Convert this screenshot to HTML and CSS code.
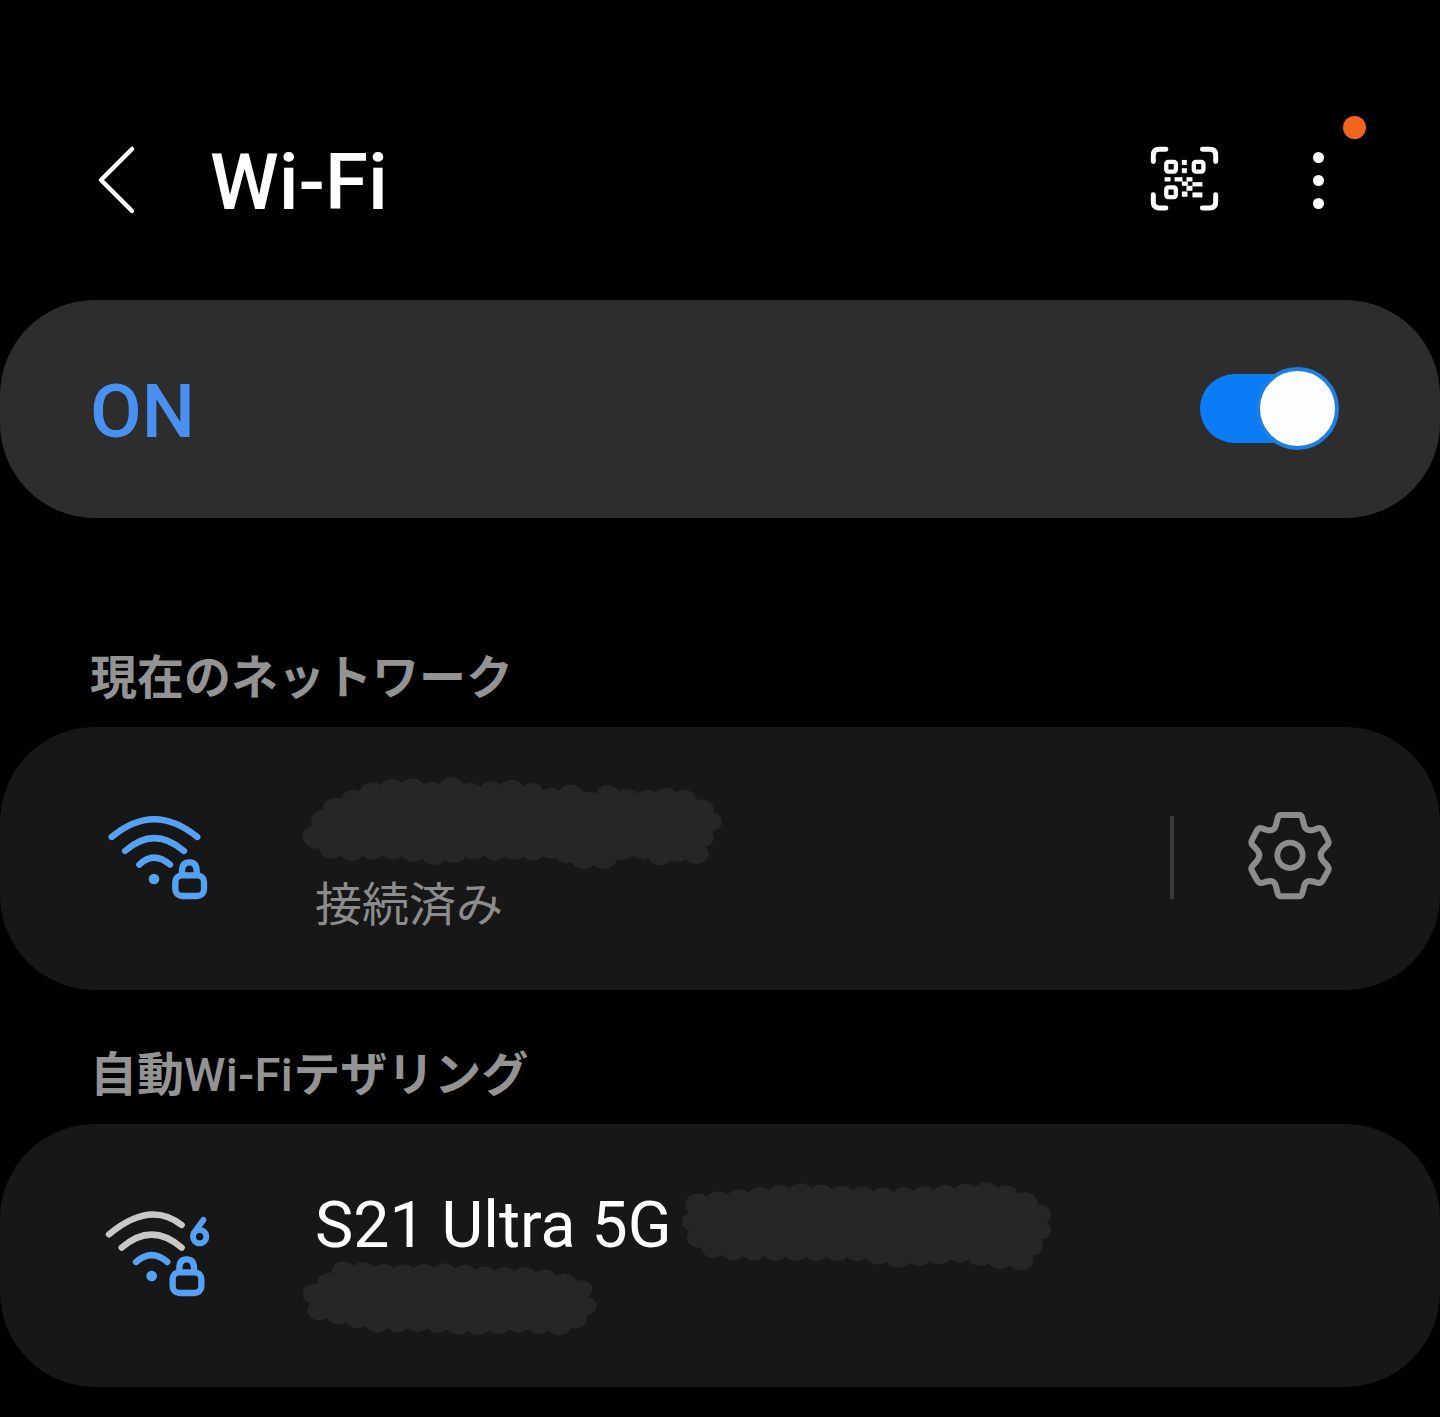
FILE: index.html
```html
<!DOCTYPE html>
<html lang="ja">
  <head>
    <title>Wi-Fi</title>
    <meta name="viewport" content="width=device-width, initial-scale=1" />
    <link rel="stylesheet" href="styles.css">
  </head>
  <body>
    <header class="header">
      <svg class="back" viewBox="0 0 40 72" width="40" height="72">
        <path d="M36 5 L5 36 L36 67" fill="none" stroke="#fff" stroke-width="4.5" stroke-linecap="round" stroke-linejoin="round" />
      </svg>
      <h1 class="title">Wi-Fi</h1>
      <svg class="qr" viewBox="60 135 212 202" width="71" height="67">
        <g fill="none" stroke="#fff" stroke-width="15" stroke-linecap="round">
          <path d="M72 185 V166 Q72 148 90 148 H110" />
          <path d="M220 148 H242 Q260 148 260 166 V185" />
          <path d="M72 285 V307 Q72 325 90 325 H110" />
          <path d="M220 325 H242 Q260 325 260 307 V285" />
        </g>
        <g fill="none" stroke="#fff" stroke-width="13">
          <rect x="111" y="186" width="29" height="29" rx="6" />
          <rect x="194" y="186" width="29" height="29" rx="6" />
          <rect x="111" y="263" width="29" height="29" rx="6" />
        </g>
        <g fill="#fff">
          <rect x="158" y="180" width="15" height="15" />
          <rect x="158" y="205" width="15" height="15" />
          <rect x="106" y="232" width="18" height="13" />
          <rect x="136" y="232" width="24" height="13" />
          <rect x="172" y="232" width="18" height="13" />
          <rect x="158" y="245" width="18" height="13" />
          <rect x="190" y="247" width="30" height="13" />
          <rect x="172" y="258" width="18" height="15" />
          <rect x="158" y="275" width="17" height="16" />
          <rect x="190" y="278" width="30" height="15" />
        </g>
      </svg>
      <div class="more">
        <span class="more-dot"></span>
        <span class="more-dot"></span>
        <span class="more-dot"></span>
        <span class="badge"></span>
      </div>
    </header>

    <section class="card-switch">
      <span class="on-label">ON</span>
      <div class="toggle"><span class="thumb"></span></div>
    </section>

    <h2 class="section-label first">現在のネットワーク</h2>
    <section class="card">
      <svg class="wifi" viewBox="0 0 450 390" width="150" height="130">
        <g fill="none" stroke="#55a2f5" stroke-width="19" stroke-linecap="round">
          <path d="M95 141 Q222 34 352 141" />
          <path d="M135 183 Q222 106 312 183" />
          <path d="M178 224 Q222 182 270 224" />
          <rect x="286" y="256" width="86" height="62" rx="20" />
          <path d="M306 254 V244 Q306 217 328 217 Q350 217 350 244 V254" />
        </g>
        <circle cx="222" cy="267" r="16" fill="#55a2f5" />
      </svg>
      <div class="net-text">
        <svg class="scribble" viewBox="293 770 440 105" width="440" height="105">
          <path transform="translate(513 822) scale(.94 .78) translate(-513 -822)" d="M302 840 L318 806 L329 802 L358 785 L400 777 L420 785 L446 777 L466 785 L520 780 L550 792 L573 786 L590 797 L616 787 L633 793 L650 791 L665 797 L683 787 L706 800 L725 815 L710 850 L708 863 L695 866 L685 857 L667 866 L650 857 L630 857 L607 871 L573 868 L567 853 L540 861 L523 853 L507 861 L487 857 L467 857 L437 865 L420 863 L397 858 L377 857 L357 858 L330 860 L310 853 Z" />
        </svg>
        <div class="net-status">接続済み</div>
      </div>
      <div class="divider"></div>
      <svg class="gear" viewBox="280 60 280 280" width="94" height="94">
        <path d="M392 78 H448 Q455 78 457 88 L462 108 Q467 128 490 122 L505 117 Q513 115 518 123 L532 150 Q538 160 532 167 L518 182 Q505 198 518 214 L532 230 Q538 238 532 247 L518 272 Q513 282 503 280 L488 276 Q467 270 462 290 L457 310 Q455 320 447 320 H393 Q385 320 383 310 L378 290 Q373 270 352 276 L337 280 Q327 282 322 272 L308 247 Q302 238 308 230 L322 214 Q335 198 322 182 L308 167 Q302 160 308 150 L322 123 Q327 115 335 117 L350 122 Q373 128 378 108 L383 88 Q385 78 392 78 Z" fill="none" stroke="#8c8c8c" stroke-width="18" stroke-linejoin="round" />
        <circle cx="420" cy="198" r="38" fill="none" stroke="#8c8c8c" stroke-width="17" />
      </svg>
    </section>

    <h2 class="section-label second">自動<span class="latin">Wi-Fi</span>テザリング</h2>
    <section class="card card-tether">
      <svg class="wifi" viewBox="0 0 450 390" width="150" height="130">
        <g fill="none" stroke-width="19" stroke-linecap="round">
          <path d="M87 133 Q210 30 305 105" stroke="#c8c8c8" />
          <path d="M125 173 Q215 95 305 173" stroke="#c8c8c8" />
          <path d="M168 216 Q215 175 262 216" stroke="#55a2f5" />
          <rect x="278" y="247" width="86" height="62" rx="20" stroke="#55a2f5" />
          <path d="M298 245 V235 Q298 208 320 208 Q342 208 342 235 V245" stroke="#55a2f5" />
          <path d="M370 90 L342 128" stroke="#55a2f5" stroke-width="18" />
          <circle cx="359" cy="140" r="20" stroke="#55a2f5" stroke-width="18" />
        </g>
        <circle cx="215" cy="258" r="16" fill="#55a2f5" />
      </svg>
      <div class="net-text">
        <div class="net-title-row">
          <span class="net-name">S21 Ultra 5G</span>
          <svg class="scribble-name" viewBox="675 1175 388 103" width="388" height="103">
            <path transform="translate(869 1226) scale(.94 .78) translate(-869 -1226)" d="M688 1197 L795 1184 L836 1187 L897 1190 L943 1187 L1004 1182 L1040 1197 L1055 1217 L1048 1240 L1033 1270 L1004 1268 L969 1260 L900 1267 L857 1258 L795 1258 L714 1257 L693 1250 L683 1227 Z" />
          </svg>
        </div>
        <svg class="scribble-sub" viewBox="295 1253 310 92" width="310" height="92">
          <path transform="translate(450 1299) scale(.92 .74) translate(-450 -1299)" d="M303 1293 L336 1261 L387 1267 L443 1265 L494 1270 L540 1270 L591 1283 L597 1313 L578 1337 L525 1333 L469 1337 L423 1332 L372 1333 L336 1323 L308 1317 Z" />
        </svg>
      </div>
    </section>
  </body>
</html>
```

FILE: styles.css
```css
html, body {
  margin: 0;
  padding: 0;
}

body {
  width: 1440px;
  height: 1417px;
  overflow: hidden;
  background-color: #000;
  font-family: Roboto, "Noto Sans CJK JP", sans-serif;
  color: #fff;
}

.header {
  display: flex;
  align-items: center;
  height: 120px;
  padding: 120px 0 60px 96px;
}

.back {
  flex: none;
}

.title {
  flex: 1;
  margin: 6px 0 0 74px;
  font-size: 78px;
  font-weight: 500;
  line-height: 120px;
}

.qr {
  flex: none;
  margin-top: -3px;
}

.more {
  position: relative;
  display: flex;
  flex-direction: column;
  align-items: center;
  gap: 12px;
  margin: 0 116px 0 93px;
}

.more-dot {
  width: 11px;
  height: 11px;
  border-radius: 50%;
  background-color: #fff;
}

.badge {
  position: absolute;
  top: -36px;
  left: 30px;
  width: 23px;
  height: 23px;
  border-radius: 50%;
  background-color: #f0641e;
}

.card-switch {
  display: flex;
  align-items: center;
  justify-content: space-between;
  height: 218px;
  padding: 0 104px 0 90px;
  border-radius: 95px;
  background-color: #2d2d2d;
}

.on-label {
  margin-top: 4px;
  font-size: 75px;
  font-weight: 500;
  color: #4a90f0;
}

.toggle {
  position: relative;
  width: 136px;
  height: 69px;
  margin-bottom: 2px;
  border-radius: 35px;
  background-color: #0a7cf5;
}

.thumb {
  position: absolute;
  top: -7px;
  right: -3px;
  box-sizing: border-box;
  width: 83px;
  height: 83px;
  border: 4px solid #1d7fe0;
  border-radius: 50%;
  background-color: #fcfdff;
}

.section-label {
  height: 60px;
  padding-left: 90px;
  font-family: Roboto, "Noto Sans CJK JP", sans-serif;
  font-size: 47px;
  font-weight: 700;
  line-height: 60px;
  color: #939393;
}

.section-label.first {
  margin: 130px 0 19px;
}

.section-label.second {
  margin: 55px 0 19px;
}

.latin {
  font-weight: 500;
  letter-spacing: .4px;
}

.card {
  display: flex;
  align-items: flex-start;
  box-sizing: border-box;
  height: 263px;
  padding-left: 80px;
  border-radius: 95px;
  background-color: #171717;
}

.wifi {
  flex: none;
  margin-top: 63px;
}

.net-text {
  flex: 1;
  margin-left: 85px;
  padding-top: 43px;
}

.scribble,
.scribble-name,
.scribble-sub {
  display: block;
  fill: #262626;
  stroke: #262626;
  stroke-width: 26;
  stroke-linecap: round;
  stroke-linejoin: round;
  stroke-dasharray: 0 22;
}

.scribble {
  margin-left: -22px;
}

.net-status {
  font-size: 47px;
  line-height: 60px;
  color: #8c8c8c;
}

.divider {
  flex: none;
  width: 4px;
  height: 83px;
  margin-top: 89px;
  background-color: #3a3a3a;
}

.gear {
  flex: none;
  margin: 82px 103px 0 69px;
}

.card-tether .wifi {
  margin-top: 66px;
}

.card-tether .net-text {
  padding-top: 51px;
}

.net-title-row {
  display: flex;
  align-items: flex-start;
}

.net-name {
  width: 359px;
  font-size: 64.4px;
  line-height: 100px;
  white-space: nowrap;
}

.scribble-sub {
  margin: -26px 0 0 -20px;
}
```
